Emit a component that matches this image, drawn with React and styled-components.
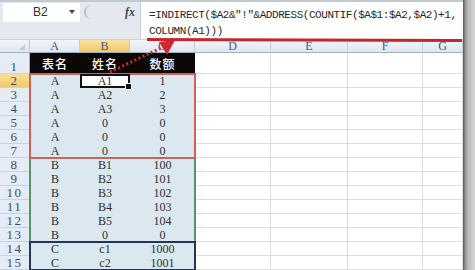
import React from "react";
import styled, { createGlobalStyle, css } from "styled-components";

const Global = createGlobalStyle`
  html, body { margin: 0; padding: 0; background: #ffffff; overflow: hidden; }
  #root { width: 475px; height: 270px; }
`;

const Page = styled.div`
  position: relative;
  width: 475px;
  height: 270px;
  display: flex;
  overflow: hidden;
  background: #ffffff;
`;

const Sheet = styled.div`
  width: 463px;
  display: flex;
  flex-direction: column;
`;

const Shadow = styled.div`
  flex: 1;
  background: linear-gradient(to right, #5a5a5a 0px, #8c8c8c 2px, #b9b9b9 5px, #d6d6d6 12px);
`;

/* ---------- formula bar ---------- */
const FormulaBar = styled.div`
  display: flex;
  background: #e4e9ef;
  border-top: 2px solid #c3c9d1;
  border-bottom: 1px solid #cdd3db;
  box-sizing: border-box;
  height: 40px;
`;

const NameArea = styled.div`
  width: 140px;
  display: flex;
  flex-direction: column;
`;

const NameRow = styled.div`
  height: 20px;
  display: flex;
  align-items: center;
  padding-left: 3px;
`;

const NameBox = styled.div`
  width: 77px;
  height: 19px;
  background: #ffffff;
  display: flex;
  align-items: center;
  box-sizing: border-box;
  padding-left: 30px;
  font-family: "Liberation Sans", Arial, sans-serif;
  font-size: 12px;
  color: #333;
`;

const NameText = styled.span`
  flex: 1;
`;

const DropArrow = styled.span`
  width: 0;
  height: 0;
  border-left: 3px solid transparent;
  border-right: 3px solid transparent;
  border-top: 4px solid #444;
  margin-right: 5px;
`;

const Grip = styled.span`
  width: 6px;
  height: 14px;
  margin-left: 4px;
  border-left: 2px solid #b8bec6;
  border-radius: 7px 0 0 7px;
`;

const Fx = styled.span`
  margin-left: 33px;
  font-family: "Liberation Serif", serif;
  font-style: italic;
  font-weight: bold;
  font-size: 12px;
  color: #444;
`;

const FormulaInput = styled.div`
  flex: 1;
  background: #ffffff;
  border-left: 1px solid #c9ced6;
  padding: 5px 0 0 8px;
  font-family: "Liberation Mono", monospace;
  font-size: 11px;
  letter-spacing: -0.45px;
  line-height: 16px;
  color: #262626;
  white-space: pre;
`;

/* ---------- grid ---------- */
const Grid = styled.div`
  flex: 1;
  display: flex;
`;

const Column = styled.div`
  display: flex;
  flex-direction: column;
  width: ${(p) => p.$w}px;
  flex: ${(p) => (p.$grow ? 1 : "none")};
`;

const headBg = css`
  background: linear-gradient(#f3f6fa, #dfe6ef);
`;

const Corner = styled.div`
  height: 13px;
  ${headBg};
  border-right: 1px solid #b9c6d6;
  border-bottom: 1px solid #9fb1c6;
  box-sizing: border-box;
  position: relative;
  &::after {
    content: "";
    position: absolute;
    right: 4px;
    bottom: 2px;
    border-left: 6px solid transparent;
    border-bottom: 6px solid #c4cad2;
  }
`;

const RowHead = styled.div`
  height: ${(p) => p.$h}px;
  box-sizing: border-box;
  background: ${(p) => (p.$sel ? "linear-gradient(#f9df9c, #f3c966)" : "#e5ecf6")};
  border-right: 1px solid #9fb1c6;
  border-bottom: 1px solid #c9d3df;
  display: flex;
  align-items: flex-end;
  justify-content: center;
  font-family: "Liberation Serif", serif;
  font-size: 13px;
  letter-spacing: 1.5px;
  line-height: 13px;
  color: #3a4d70;
`;

const HeadRow = styled.div`
  height: 13px;
  display: flex;
`;

const ColHead = styled.div`
  width: ${(p) => p.$w}px;
  flex: ${(p) => (p.$grow ? 1 : "none")};
  box-sizing: border-box;
  ${(p) => (p.$sel ? "background: linear-gradient(#fae3a4, #f2c862);" : headBg)};
  border-right: 1px solid #c3ceda;
  border-bottom: 1px solid #9fb1c6;
  display: flex;
  align-items: center;
  justify-content: center;
  font-family: "Liberation Serif", serif;
  font-size: 12px;
  color: #46567a;
`;

const DataRow = styled.div`
  height: ${(p) => p.$h}px;
  display: flex;
  background: ${(p) => (p.$dark ? "#0d0808" : "#dce8ef")};
`;

const Cell = styled.div`
  width: ${(p) => p.$w}px;
  box-sizing: border-box;
  display: flex;
  align-items: center;
  justify-content: center;
  font-family: "Liberation Serif", "Noto Sans CJK SC", serif;
  font-size: 12px;
  color: #303030;
  position: relative;
  ${(p) =>
    p.$head &&
    css`
      color: #ffffff;
      font-family: "Noto Sans CJK SC", sans-serif;
      font-size: 12px;
      font-weight: 500;
      letter-spacing: 1px;
      padding-bottom: 1px;
    `}
  ${(p) =>
    p.$active &&
    css`
      background: #ffffff;
      border: 2px solid #111;
      &::after {
        content: "";
        position: absolute;
        right: -4px;
        bottom: -4px;
        width: 5px;
        height: 5px;
        background: #111;
        border: 1px solid #fff;
        z-index: 2;
      }
    `}
`;

const Group = styled.div`
  display: flex;
  flex-direction: column;
  outline: 2px solid ${(p) => p.$c};
  outline-offset: -1px;
  position: relative;
  z-index: ${(p) => p.$z || 0};
`;

const EmptyRow = styled.div`
  height: ${(p) => p.$h}px;
  display: flex;
`;

const EmptyCell = styled.div`
  width: ${(p) => p.$w}px;
  flex: ${(p) => (p.$grow ? 1 : "none")};
  box-sizing: border-box;
  border-right: 1px solid #d9dcdf;
  border-bottom: 1px solid #dcdfe2;
`;

const Overlay = styled.svg`
  position: absolute;
  left: 0;
  top: 0;
  pointer-events: none;
  z-index: 5;
`;

const dataCols = [50, 50, 65];
const emptyCols = [76, 77, 75, 0];
const emptyNames = ["D", "E", "F", "G"];

const groups = [
  {
    color: "#c8625d",
    rows: [
      ["A", "A1", "1"],
      ["A", "A2", "2"],
      ["A", "A3", "3"],
      ["A", "0", "0"],
      ["A", "0", "0"],
      ["A", "0", "0"],
    ],
  },
  {
    color: "#55966a",
    rows: [
      ["B", "B1", "100"],
      ["B", "B2", "101"],
      ["B", "B3", "102"],
      ["B", "B4", "103"],
      ["B", "B5", "104"],
      ["B", "0", "0"],
    ],
  },
  {
    color: "#23355e",
    rows: [
      ["C", "c1", "1000"],
      ["C", "c2", "1001"],
    ],
  },
];

const ROW_H = 14;
const FIRST_H = 21;
const rowNums = Array.from({ length: 14 }, (_, i) => i + 2);

export default function App() {
  let rowIndex = 2;
  return (
    <Page>
      <Global />
      <Sheet>
        <FormulaBar>
          <NameArea>
            <NameRow>
              <NameBox>
                <NameText>B2</NameText>
                <DropArrow />
              </NameBox>
              <Grip />
              <Fx>fx</Fx>
            </NameRow>
          </NameArea>
          <FormulaInput>
            {'=INDIRECT($A2&"!"&ADDRESS(COUNTIF($A$1:$A2,$A2)+1,\nCOLUMN(A1)))'}
          </FormulaInput>
        </FormulaBar>
        <Grid>
          <Column $w={30}>
            <Corner />
            <RowHead $h={FIRST_H}>1</RowHead>
            {rowNums.map((n) => (
              <RowHead key={n} $h={ROW_H} $sel={n === 2}>
                {n}
              </RowHead>
            ))}
          </Column>
          <Column $w={165}>
            <HeadRow>
              {["A", "B", "C"].map((c, i) => (
                <ColHead key={c} $w={dataCols[i]} $sel={c === "B"}>
                  {c}
                </ColHead>
              ))}
            </HeadRow>
            <DataRow $h={FIRST_H} $dark>
              {["表名", "姓名", "数额"].map((t, i) => (
                <Cell key={t} $w={dataCols[i]} $head>
                  {t}
                </Cell>
              ))}
            </DataRow>
            {groups.map((g, gi) => (
              <Group key={gi} $c={g.color} $z={gi === 0 ? 1 : 0}>
                {g.rows.map((r, ri) => {
                  const rn = rowIndex++;
                  return (
                    <DataRow key={ri} $h={ROW_H}>
                      {r.map((v, ci) => (
                        <Cell
                          key={ci}
                          $w={dataCols[ci]}
                          $active={rn === 2 && ci === 1}
                        >
                          {v}
                        </Cell>
                      ))}
                    </DataRow>
                  );
                })}
              </Group>
            ))}
          </Column>
          <Column $grow>
            <HeadRow>
              {emptyNames.map((c, i) => (
                <ColHead key={c} $w={emptyCols[i]} $grow={!emptyCols[i]}>
                  {c}
                </ColHead>
              ))}
            </HeadRow>
            {[FIRST_H, ...rowNums.map(() => ROW_H)].map((h, i) => (
              <EmptyRow key={i} $h={h}>
                {emptyCols.map((w, j) => (
                  <EmptyCell key={j} $w={w} $grow={!w} />
                ))}
              </EmptyRow>
            ))}
          </Column>
        </Grid>
      </Sheet>
      <Shadow />
      <Overlay width="475" height="270" viewBox="0 0 475 270">
        <line x1="147" y1="39.5" x2="462" y2="40.5" stroke="#c3262c" strokeWidth="3" />
        <line
          x1="110"
          y1="72"
          x2="163"
          y2="47"
          stroke="#d0282f"
          strokeWidth="3"
          strokeDasharray="2 2.5"
        />
        <polygon points="175,40 159,42 167,55" fill="#d4262d" />
      </Overlay>
    </Page>
  );
}
